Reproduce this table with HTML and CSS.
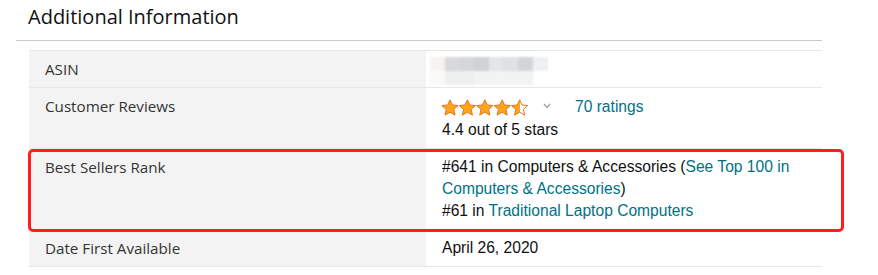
FILE: index.html
```html
<!DOCTYPE html>
<html lang="en">
<head>
<meta charset="utf-8">
<title>Additional Information</title>
<link rel="stylesheet" href="styles.css">
</head>
<body>
<section class="section">
  <h2 class="heading">Additional Information</h2>
  <table class="details">
    <tbody>
      <tr>
        <th class="label">ASIN</th>
        <td class="value">
          <div class="blur">
            <div class="blur-grid">
              <span class="b1"></span><span class="b2"></span><span class="b3"></span><span class="b4"></span><span class="b5"></span><span class="b6"></span><span class="b7"></span><span class="b8"></span>
              <span class="c1"></span><span class="c2"></span><span class="c2"></span><span class="c3"></span><span class="c3"></span><span class="c4"></span><span class="c4"></span><span class="c5"></span>
            </div>
          </div>
        </td>
      </tr>
      <tr>
        <th class="label">Customer Reviews</th>
        <td class="value">
          <div class="rating-line">
            <svg class="stars" width="88" height="17" viewBox="0 0 88 17" aria-label="4.4 out of 5 stars">
              <defs>
                <linearGradient id="half" x1="0" x2="1" y1="0" y2="0">
                  <stop offset="0.5" stop-color="#ffa41c"/>
                  <stop offset="0.5" stop-color="#ffffff"/>
                </linearGradient>
                <polygon id="star" points="9,0.8 11.35,5.96 17.18,6.54 12.8,10.44 14.05,16.16 9,13.2 3.95,16.16 5.2,10.44 0.82,6.54 6.65,5.96"/>
              </defs>
              <g stroke="#de7921" stroke-width="1" stroke-linejoin="round">
                <use href="#star" x="0" fill="#ffa41c"/>
                <use href="#star" x="17.4" fill="#ffa41c"/>
                <use href="#star" x="34.8" fill="#ffa41c"/>
                <use href="#star" x="52.2" fill="#ffa41c"/>
                <use href="#star" x="69.6" fill="url(#half)"/>
              </g>
            </svg>
            <svg class="chevron" width="8" height="6" viewBox="0 0 8 6"><polyline points="1,1 4,4.5 7,1" fill="none" stroke="#a6a6a6" stroke-width="1.4"/></svg>
            <a class="link ratings" href="#">70 ratings</a>
          </div>
          <div>4.4 out of 5 stars</div>
        </td>
      </tr>
      <tr>
        <th class="label">Best Sellers Rank</th>
        <td class="value">
          <div>#641 in Computers &amp; Accessories (<a class="link" href="#">See Top 100 in Computers &amp; Accessories</a>)</div>
          <div>#61 in <a class="link" href="#">Traditional Laptop Computers</a></div>
        </td>
      </tr>
      <tr>
        <th class="label">Date First Available</th>
        <td class="value">April 26, 2020</td>
      </tr>
    </tbody>
  </table>
  <div class="highlight" aria-hidden="true"></div>
</section>
</body>
</html>
```

FILE: styles.css
```css
* { box-sizing: border-box; }

html, body {
  margin: 0;
  padding: 0;
  background: #ffffff;
}

.section {
  position: relative;
  margin-left: 16px;
  width: 806px;
  padding-bottom: 8px;
}

.heading {
  margin: 0;
  height: 41px;
  padding: 3px 0 0 12px;
  font-family: "Open Sans", "Noto Sans", sans-serif;
  font-weight: 400;
  font-size: 20px;
  line-height: 28px;
  color: #0f1111;
  border-bottom: 1px solid #cccccc;
}

.details {
  margin: 9px 0 0 13px;
  width: 793px;
  border-collapse: collapse;
  border-top: 1px solid #e7e7e7;
  table-layout: fixed;
}

.details tr {
  border-bottom: 1px solid #e7e7e7;
}

.label {
  width: 397px;
  background: #f3f3f3;
  text-align: left;
  vertical-align: top;
  font-family: "Open Sans", "Noto Sans", sans-serif;
  font-weight: 400;
  font-size: 15.2px;
  line-height: 22px;
  color: #333333;
  padding: 7px 16px;
}

.value {
  vertical-align: top;
  font-family: "Liberation Sans", Arial, sans-serif;
  font-size: 15.6px;
  line-height: 22px;
  color: #0f1111;
  padding: 7px 16px;
}

.link {
  color: #007185;
  text-decoration: none;
}

.blur {
  height: 23px;
}

.blur-grid {
  display: grid;
  grid-template-columns: repeat(8, 14.7px);
  grid-auto-rows: 14px;
  margin: -1px 0 0 -12px;
  filter: blur(0.8px);
}

.b1 { background: #f7f3ef; }
.b2 { background: #d8d9da; }
.b3 { background: #d5d6d7; }
.b4 { background: #cfd3d4; }
.b5 { background: #e4e5e6; }
.b6 { background: #e0e1e3; }
.b7 { background: #d4d5d7; }
.b8 { background: #eef0f2; }
.c1 { background: #fbf8f8; }
.c2 { background: #eef0ef; }
.c3 { background: #f2f3f3; }
.c4 { background: #f3f3f3; }
.c5 { background: #ffffff; }

.rating-line {
  display: flex;
  align-items: center;
  height: 24px;
}

.stars {
  display: block;
  margin-left: -1px;
}

.chevron {
  display: block;
  margin-left: 14px;
  margin-top: -2px;
}

.ratings {
  margin-left: 24px;
  line-height: 22px;
}

.highlight {
  position: absolute;
  left: 12px;
  top: 149px;
  width: 816px;
  height: 83px;
  border: 3px solid #ff1f1f;
  border-radius: 5px;
  pointer-events: none;
}
```
